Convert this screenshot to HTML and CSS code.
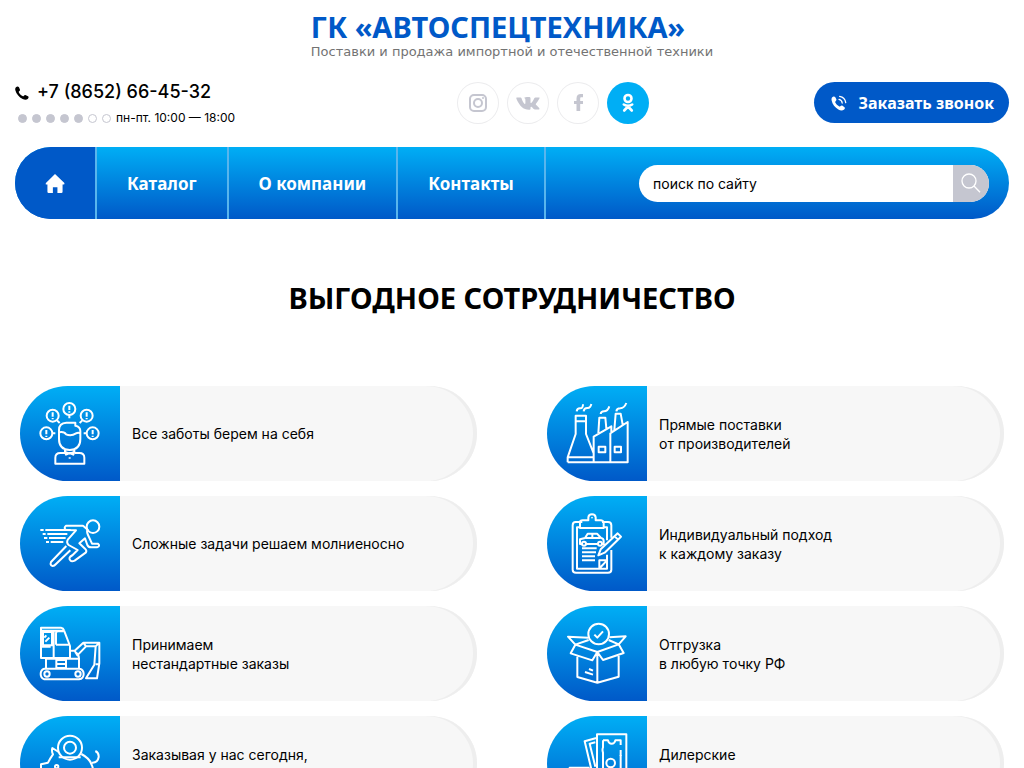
FILE: index.html
```html
<!DOCTYPE html>
<html lang="ru">
<head>
<meta charset="utf-8">
<meta name="viewport" content="width=device-width, initial-scale=1">
<title>ГК «АВТОСПЕЦТЕХНИКА»</title>
<link rel="stylesheet" href="styles.css">
</head>
<body>
<header class="header">
  <a class="brand" href="#">
    <span class="brand-name">ГК «АВТОСПЕЦТЕХНИКА»</span>
    <span class="brand-slogan">Поставки и продажа импортной и отечественной техники</span>
  </a>
  <div class="contacts">
    <div class="contact-info">
      <a class="phone" href="tel:+78652664532">
        <svg class="phone-icon" viewBox="0 0 42 42" aria-hidden="true"><path d="M3 4C6 0 10 1 12 4L15 11C16 14 11 16 11 18C13 23 18 28 24 31C26 31 28 26 31 27L39 31C42 33 41 37 38 39C34 42 28 41 23 39C12 34 4 24 1 13C0 9 1 6 3 4Z"/></svg>
        <span>+7 (8652) 66-45-32</span>
      </a>
      <div class="schedule">
        <span class="days" aria-hidden="true"><i class="day day-on"></i><i class="day day-on"></i><i class="day day-on"></i><i class="day day-on"></i><i class="day day-on"></i><i class="day"></i><i class="day"></i></span>
        <span class="hours">пн-пт. 10:00 — 18:00</span>
      </div>
    </div>
    <div class="actions">
      <div class="socials">
        <a class="social" href="#" aria-label="Instagram"><svg viewBox="0 0 42 42" aria-hidden="true"><rect x="13" y="13" width="16" height="16" rx="4" fill="none" stroke="#c5c6d0" stroke-width="2"/><circle cx="21" cy="21" r="4" fill="none" stroke="#c5c6d0" stroke-width="2"/><circle cx="26" cy="16" r="1" fill="#c5c6d0"/></svg></a>
        <a class="social" href="#" aria-label="ВКонтакте"><svg viewBox="0 0 42 42" aria-hidden="true"><path fill="#c5c6d0" d="M10 15.5h3.6q.6 0 .9.8c.8 2.400 1.800 4.400 2.900 5.400.6.500 1 .2 1-.8v-3c0-1.200-.5-1.500-1.300-1.800.8-1 2.100-1.100 4-1.100 2 0 2.400.4 2.400 1.600v3.600c0 1 .5 1.100 1 .6 1.200-1.200 2.200-3.200 2.900-4.700q.3-.6 1-.6h3.700c.6 0 .6.500.3 1.100-.9 1.900-2.300 3.500-3.300 4.900-.5.700-.4 1 .1 1.500 1.100 1 2.600 2.300 3.100 3.300.4.800 0 1.300-.9 1.300h-3.400c-1.100 0-2.100-1.600-3.300-2.600-.7-.5-1.200-.2-1.200.7v1c0 .7-.5 1-1.500 1-5.700 0-9.400-3.900-12.500-10.800-.3-.8-.3-1.400.5-1.400Z"/></svg></a>
        <a class="social" href="#" aria-label="Facebook"><svg viewBox="0 0 42 42" aria-hidden="true"><path fill="#c5c6d0" d="M19.500 29V22H17v-3h2.500v-2.500c0-3.300 1.700-4.500 4.300-4.500H26v3.200h-1.500c-1 0-1.300.5-1.300 1.300V19H26v3h-2.800v7Z"/></svg></a>
        <a class="social social-active" href="#" aria-label="Одноклассники"><svg viewBox="0 0 42 42" aria-hidden="true" fill="none" stroke="#fff" stroke-width="2.600" stroke-linecap="round"><circle cx="21" cy="16.500" r="3.500"/><path d="M16.800 22.500q4.200 2.600 8.400 0M21 24.500l-3.800 4M21 24.500l3.800 4"/></svg></a>
      </div>
      <button class="call" type="button">
        <svg class="call-icon" viewBox="0 0 50 50" aria-hidden="true"><path fill="#fff" d="M4 7C7 3 12 4 14 8L17 14C18 18 12 20 13 23C16 29 20 33 26 36C29 37 31 31 35 33L42 38C45 40 43 44 40 46C35 50 28 48 23 45C13 39 4 29 2 17C1 13 2 9 4 7Z"/><path fill="none" stroke="#fff" stroke-width="4" stroke-linecap="round" d="M25 14Q34 16 35 25M27 4Q44 7 46 24"/></svg>
        <span>Заказать звонок</span>
      </button>
    </div>
  </div>
  <nav class="nav">
    <a class="nav-item nav-home" href="#" aria-label="Главная"><svg class="home-icon" viewBox="0 0 66 64" aria-hidden="true"><path fill="#fff" d="M33 1L64 30Q66 35 60 35H58V59Q58 63 54 63H41V44H26V63H12Q8 63 8 59V35H5Q0 35 3 30Z"/></svg></a>
    <a class="nav-item" href="#">Каталог</a>
    <a class="nav-item" href="#">О компании</a>
    <a class="nav-item" href="#">Контакты</a>
    <form class="search" role="search">
      <input class="search-input" type="text" aria-label="поиск по сайту" value="поиск по сайту">
      <button class="search-button" type="button" aria-label="Найти"><svg viewBox="0 0 60 60" aria-hidden="true" fill="none" stroke="#fff" stroke-width="4"><circle cx="24" cy="24" r="21"/><path d="M39 39L57 58"/></svg></button>
    </form>
  </nav>
</header>
<main class="benefits">
  <h1 class="title">ВЫГОДНОЕ СОТРУДНИЧЕСТВО</h1>
  <ul class="cards">
    <li class="card">
      <span class="card-icon"><svg viewBox="30 18 300 285" aria-hidden="true"><circle cx="178" cy="87" r="18"/><circle cx="128" cy="107" r="18"/><circle cx="230" cy="107" r="18"/><circle cx="109" cy="160" r="18"/><circle cx="248" cy="160" r="18"/><path d="M178 77v13M178 94v4M128 97v13M128 114v4M230 97v13M230 114v4M109 150v13M109 167v4M248 150v13M248 167v4M178 105v10M141 121l8 8M217 121l-8 8M127 160h9M221 160h9"/><path d="M147 163V150Q147 129 169 128H196V137Q211 140 211 153V177Q211 209 179 210Q147 209 147 177ZM147 157Q163 154 168 163Q184 169 198 160Q205 156 211 160M165 208V216L179 221L193 216V208M165 216L168 224L179 219L190 224L193 216M164 219H151Q136 219 136 233V251H223V233Q223 219 208 219H195M179 232v4"/></svg></span>
      <p class="card-text">Все заботы берем на себя</p>
    </li>
    <li class="card">
      <span class="card-icon"><svg viewBox="20 18 300 285" aria-hidden="true"><path d="M82 247H262V126L213 158V139L160 170V247M82 247V232L106 162V107H137V162L160 220M82 232H160M106 124H137M174 160L177 113H195L198 145M222 150L226 101H241L247 134M210 158V247M109 94Q110 85 119 85Q128 86 128 73M130 94Q131 84 141 84Q150 85 153 72M181 102Q182 94 191 94Q202 94 207 79M228 94Q229 85 240 85Q252 84 258 69M175 200H195V217H175ZM223 200H242V217H223Z"/></svg></span>
      <p class="card-text">Прямые поставки<br>от производителей</p>
    </li>
    <li class="card">
      <span class="card-icon"><svg viewBox="30 18 300 285" aria-hidden="true"><circle cx="249" cy="110" r="19"/><path d="M91 120h10M106 120h76M98 132h9M112 132h60M102 144h10M117 144h50M108 156h9M122 156h38M217 107H168Q160 114 168 120L198 121L174 148Q168 158 176 165L203 180L188 195Q173 203 181 211Q185 216 194 212L228 187Q231 182 225 176L208 160L225 145L232 165Q235 172 243 172H261Q272 168 264 161H246L234 135Q229 125 233 119L220 108ZM169 168L123 216Q119 226 128 228Q133 228 138 222L181 181"/></svg></span>
      <p class="card-text">Сложные задачи решаем молниеносно</p>
    </li>
    <li class="card">
      <span class="card-icon"><svg viewBox="20 18 300 285" aria-hidden="true"><path d="M126 96H106Q97 96 97 106V239Q97 248 107 248H203Q213 248 213 239V180M213 143V106Q213 96 203 96H185M119 112H110V236H176L200 211V194M200 151V112H190M119 114V98Q119 91 127 91H144V82Q145 73 155 73Q165 73 166 82V91H182Q190 92 190 99V114ZM155 82v3M125 162H119V148L134 144L142 131H170L182 144Q190 145 190 153V162H185M137 162H173M136 144H179M156 132V143M125 175H169M125 187H167M125 199H164M125 211H164M177 236V211H200V236H177L200 211M174 196L181 178L232 130L242 140L193 188ZM174 196L193 188M223 139L233 149"/><circle cx="131" cy="161" r="6"/><circle cx="179" cy="161" r="6"/></svg></span>
      <p class="card-text">Индивидуальный подход<br>к каждому заказу</p>
    </li>
    <li class="card">
      <span class="card-icon"><svg viewBox="30 18 300 285" aria-hidden="true"><path d="M93 83H153Q160 84 162 91L180 138V174H93ZM93 92H159M99 96H126V136H99ZM103 113l6-7M106 125l12-12M138 134V100Q138 94 144 94H160M138 134H179M131 94V174M93 140H122M108 175V205M207 205V175M181 152H194L220 128H268V190L261 235H228L253 194L257 139H228L202 166L194 152M195 157Q206 160 207 176H108M220 128L228 139M268 128L257 139M257 193H268M103 206H209Q221 209 221 222Q221 236 207 238H103Q92 234 92 222Q92 209 103 206ZM139 180H168V204H139ZM139 192H168"/><circle cx="111" cy="222" r="8"/><circle cx="204" cy="222" r="8"/></svg></span>
      <p class="card-text">Принимаем<br>нестандартные заказы</p>
    </li>
    <li class="card">
      <span class="card-icon"><svg viewBox="20 18 300 285" aria-hidden="true"><circle cx="175" cy="102" r="31"/><path d="M162 104L171 113L188 94M144 113L83 110L105 134L91 160L156 181L171 156L188 180L250 159L235 133L256 109L207 112M105 134L171 156L235 133L205 120M105 134L145 120M111 170V231L171 248L235 230V168M171 156V246M146 207L158 212M134 216L158 224"/></svg></span>
      <p class="card-text">Отгрузка<br>в любую точку РФ</p>
    </li>
    <li class="card">
      <span class="card-icon"><svg viewBox="30 348 300 285" aria-hidden="true"><circle cx="180" cy="443" r="36"/><circle cx="180" cy="443" r="18"/><path d="M146 472H212M146 456L127 444Q124 455 129 463Q119 477 114 488L93 493V530L115 535Q123 553 138 563V585H162V572H204V585H228V562Q249 545 249 515Q249 480 214 462M246 488Q263 489 266 471Q267 458 256 453"/><circle cx="140" cy="500" r="5"/></svg></span>
      <p class="card-text">Заказывая у нас сегодня,<br>&nbsp;</p>
    </li>
    <li class="card">
      <span class="card-icon"><svg viewBox="20 348 300 285" aria-hidden="true"><path d="M170 403H258V578H170ZM188 421H203Q205 431 214 431Q223 431 225 421H241V435M188 421V442Q185 449 188 458V530M241 450V530M168 414L133 424L156 520M165 427L148 431L165 500M88 503H145V580H88Z"/><circle cx="211" cy="489" r="13"/><path d="M241 465v3"/></svg></span>
      <p class="card-text">Дилерские<br>&nbsp;</p>
    </li>
  </ul>
</main>
</body>
</html>
```
FILE: styles.css
```css
* { box-sizing: border-box; }

body {
  margin: 0;
  background: #fff;
  color: #000;
  font-family: "Noto Sans", sans-serif;
  font-size: 14px;
}

a { color: inherit; text-decoration: none; }
svg { display: block; }

.header { padding: 11px 15px 0; }

.brand {
  display: flex;
  flex-direction: column;
  width: max-content;
  max-width: 100%;
  margin: 0 auto;
}

.brand-name {
  color: #0059c8;
  font-size: 29px;
  font-weight: 700;
  line-height: 32px;
}

.brand-slogan {
  color: #737373;
  font-family: "DejaVu Sans", sans-serif;
  font-size: 13px;
  line-height: 18px;
}

.contacts {
  display: grid;
  grid-template-columns: 4fr 5fr;
  align-items: start;
  padding-top: 20px;
}

.phone {
  display: flex;
  align-items: center;
  gap: 8px;
  height: 20px;
  font-family: Inter, sans-serif;
  font-size: 18px;
  font-weight: 500;
}

.phone-icon { width: 14px; height: 14px; margin-top: 4px; }

.schedule {
  display: flex;
  align-items: center;
  gap: 5px;
  margin-top: 9px;
  padding-left: 3px;
  font-family: Inter, sans-serif;
  font-size: 12px;
  line-height: 16px;
}

.days { display: flex; gap: 5px; }

.day {
  width: 9px;
  height: 9px;
  border: 1px solid #c5c6d0;
  border-radius: 50%;
}

.day-on { background: #c5c6d0; }

.actions { display: flex; justify-content: space-between; padding-top: 1px; }

.socials { display: flex; gap: 8px; }

.social {
  width: 42px;
  height: 42px;
  border-radius: 50%;
  box-shadow: inset 0 0 0 1px #ececee;
}

.social-active { background: #00aef5; box-shadow: none; }

.call {
  display: flex;
  align-items: center;
  gap: 12px;
  height: 41px;
  padding: 0 15px 0 17px;
  border: 0;
  border-radius: 21px;
  background: #0059c8;
  color: #fff;
  font-family: "Noto Sans", sans-serif;
  font-size: 16px;
  font-weight: 700;
}

.call-icon { width: 16px; height: 16px; }

.nav {
  display: flex;
  align-items: stretch;
  height: 72px;
  margin-top: 21px;
  overflow: hidden;
  border-radius: 36px;
  background: linear-gradient(#00aef5, #0059c8);
}

.nav-item {
  display: flex;
  align-items: center;
  justify-content: center;
  padding: 0 30px;
  border-right: 2px solid #59b5ed;
  color: #fff;
  font-size: 17px;
  font-weight: 700;
}

.nav-home { width: 82px; background: #0059c8; }
.home-icon { width: 22px; height: 21px; }

.search {
  display: flex;
  align-self: center;
  width: 350px;
  height: 37px;
  margin: 0 20px 0 auto;
  overflow: hidden;
  border-radius: 19px;
  background: #fff;
}

.search-input {
  flex: 1;
  min-width: 0;
  padding: 0 14px;
  border: 0;
  outline: 0;
  background: transparent;
  color: #000;
  font-family: Inter, sans-serif;
  font-size: 14px;
}

.search-button {
  width: 36px;
  padding: 0 8px;
  border: 0;
  background: #c5c6d0;
}

.search-button svg { width: 20px; height: 20px; }

.benefits { padding: 59px 20px 20px; }

.title {
  margin: 0;
  font-size: 29px;
  font-weight: 700;
  line-height: 40px;
  text-align: center;
}

.cards {
  display: grid;
  grid-template-columns: 1fr 1fr;
  gap: 15px 70px;
  margin: 68px 0 0;
  padding: 0;
  list-style: none;
}

.card {
  display: flex;
  align-items: center;
  min-height: 95px;
  overflow: hidden;
  border-radius: 48px;
  background: #f7f7f7;
  box-shadow: inset -4px 0 #eee;
}

.card-icon {
  flex: none;
  align-self: stretch;
  width: 100px;
  background: linear-gradient(#00aef5, #0059c8);
}

.card-icon svg {
  width: 100px;
  height: 95px;
  fill: none;
  stroke: #fff;
  stroke-width: 6;
  stroke-linejoin: round;
}

.card-text {
  margin: 0;
  padding: 0 12px;
  font-family: Inter, sans-serif;
  font-size: 14px;
  line-height: 19px;
}
```
